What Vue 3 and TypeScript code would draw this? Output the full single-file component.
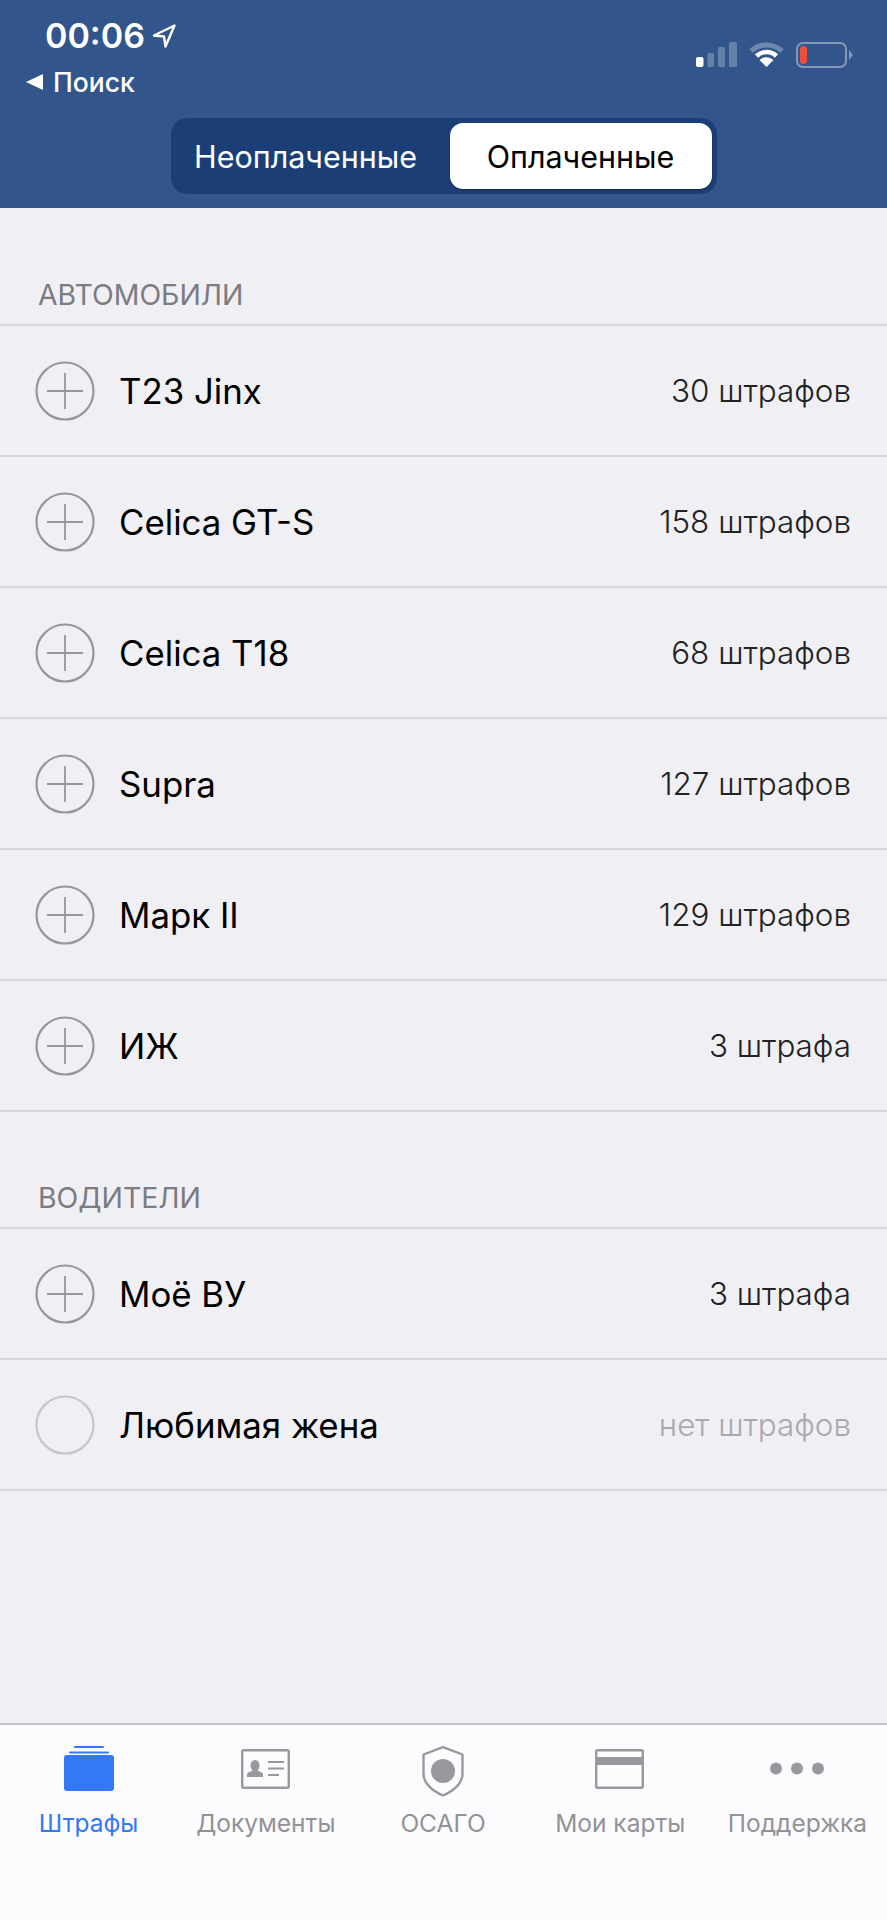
<script setup lang="ts">
interface Row { name: string; count: string; empty?: boolean }
const cars: Row[] = [
  { name: 'T23 Jinx', count: '30 штрафов' },
  { name: 'Celica GT-S', count: '158 штрафов' },
  { name: 'Celica T18', count: '68 штрафов' },
  { name: 'Supra', count: '127 штрафов' },
  { name: 'Марк II', count: '129 штрафов' },
  { name: 'ИЖ', count: '3 штрафа' },
]
const drivers: Row[] = [
  { name: 'Моё ВУ', count: '3 штрафа' },
  { name: 'Любимая жена', count: 'нет штрафов', empty: true },
]
const sections = [
  { title: 'АВТОМОБИЛИ', rows: cars },
  { title: 'ВОДИТЕЛИ', rows: drivers },
]
</script>

<template>
  <div class="screen">
    <header class="head">
      <div class="status">
        <div class="status-left">
          <div class="time-line">
            <span class="time">00:06</span>
            <svg class="loc" width="24" height="24" viewBox="0 0 24 24"><path d="M22.500 1.500 L2 11.500 L12 12.500 L13.500 22.500 Z" fill="none" stroke="#fff" stroke-width="2.400" stroke-linejoin="round"/></svg>
          </div>
          <div class="back-line">
            <svg width="17" height="16" viewBox="0 0 17 16"><path d="M17 0 L0 8 L17 16 Z" fill="#fff"/></svg>
            <span class="back">Поиск</span>
          </div>
        </div>
        <div class="status-right">
          <svg width="41" height="25" viewBox="0 0 41 25">
            <rect x="0" y="15" width="7.500" height="10" rx="2" fill="#fff"/>
            <rect x="11.500" y="11" width="6.500" height="14" rx="1.500" fill="#fff" opacity=".25"/>
            <rect x="22" y="5" width="7" height="20" rx="1.500" fill="#fff" opacity=".25"/>
            <rect x="33" y="0" width="8" height="25" rx="1.500" fill="#fff" opacity=".25"/>
          </svg>
          <svg class="wifi" width="35" height="25" viewBox="0 0 35 25">
            <path d="M2 9 A23 23 0 0 1 33 9" fill="none" stroke="#fff" stroke-opacity=".3" stroke-width="5"/>
            <path d="M7.500 14 A14.500 14.500 0 0 1 27.500 14" fill="none" stroke="#fff" stroke-width="4.500"/>
            <path d="M17.500 25 L10.500 18 A10 10 0 0 1 24.500 18 Z" fill="#fff"/>
          </svg>
          <div class="battery">
            <div class="batt-body"><span class="batt-level"></span></div>
            <span class="batt-tip"></span>
          </div>
        </div>
      </div>
      <div class="segment">
        <div class="seg seg-off">Неоплаченные</div>
        <div class="seg seg-on">Оплаченные</div>
      </div>
    </header>

    <main class="content">
      <section v-for="s in sections" :key="s.title" class="section">
        <h2 class="title">{{ s.title }}</h2>
        <div class="list">
          <div v-for="r in s.rows" :key="r.name" class="row">
            <svg v-if="!r.empty" class="mark" width="60" height="60" viewBox="0 0 60 60">
              <circle cx="30" cy="30" r="28.500" fill="none" stroke="#96969b" stroke-width="2.200"/>
              <path d="M12 30 H48 M30 12 V48" stroke="#96969b" stroke-width="1.800"/>
            </svg>
            <svg v-else class="mark" width="60" height="60" viewBox="0 0 60 60">
              <circle cx="30" cy="30" r="28.500" fill="none" stroke="#c6c6c9" stroke-width="2.200"/>
            </svg>
            <span class="name">{{ r.name }}</span>
            <span class="count" :class="{ muted: r.empty }">{{ r.count }}</span>
          </div>
        </div>
      </section>
    </main>

    <nav class="tabs">
      <div class="tab active">
        <svg width="52" height="56" viewBox="0 0 52 56">
          <rect x="11" y="1" width="30" height="2" rx="1" fill="#3478f6"/>
          <rect x="6" y="6.500" width="40" height="2" rx="1" fill="#3478f6"/>
          <rect x="1" y="10" width="50" height="36" rx="3" fill="#3478f6"/>
        </svg>
        <span>Штрафы</span>
      </div>
      <div class="tab">
        <svg width="52" height="56" viewBox="0 0 52 56">
          <rect x="2.200" y="5.200" width="46.600" height="37.600" rx="1.500" fill="none" stroke="#98989d" stroke-width="2.400"/>
          <ellipse cx="15" cy="20.500" rx="4.500" ry="5.500" fill="#98989d"/>
          <path d="M7 32 V29.500 c0 -3 5 -2.500 6 -5 h4 c1 2.500 6 2 6 5 V32 Z" fill="#98989d"/>
          <path d="M28 17 H44 M28 23.500 H44 M28 30 H39" stroke="#98989d" stroke-width="2"/>
        </svg>
        <span>Документы</span>
      </div>
      <div class="tab">
        <svg width="52" height="56" viewBox="0 -3 52 56">
          <path d="M26 -0.800 L45.500 6.500 V26 C45.500 35 37 43 26 47.500 C15 43 6.500 35 6.500 26 V6.500 Z" fill="none" stroke="#98989d" stroke-width="2.400" stroke-linejoin="round"/>
          <circle cx="26" cy="23" r="12" fill="#98989d"/>
        </svg>
        <span>ОСАГО</span>
      </div>
      <div class="tab">
        <svg width="52" height="56" viewBox="0 0 52 56">
          <rect x="2.200" y="5.200" width="46.600" height="37.600" rx="1.500" fill="none" stroke="#98989d" stroke-width="2.400"/>
          <rect x="2" y="12" width="47" height="8" fill="#98989d"/>
        </svg>
        <span>Мои карты</span>
      </div>
      <div class="tab">
        <svg width="56" height="56" viewBox="0 0 56 56">
          <circle cx="7" cy="23.500" r="6" fill="#98989d"/>
          <circle cx="28" cy="23.500" r="6" fill="#98989d"/>
          <circle cx="49" cy="23.500" r="6" fill="#98989d"/>
        </svg>
        <span>Поддержка</span>
      </div>
    </nav>
  </div>
</template>

<style>
html, body { margin: 0; background: #efeff4; }
</style>

<style scoped>
.screen {
  width: 887px;
  height: 1920px;
  display: flex;
  flex-direction: column;
  overflow: hidden;
  background: #efeff4;
  font-family: Inter, "Liberation Sans", sans-serif;
  color: #000;
}
.head {
  height: 208px;
  flex: none;
  box-sizing: border-box;
  background: #32568c;
  color: #fff;
  display: flex;
  flex-direction: column;
  align-items: center;
}
.status {
  width: 100%;
  height: 118px;
  box-sizing: border-box;
  display: flex;
  justify-content: space-between;
  padding: 16px 34px 0 26px;
}
.status-left { display: flex; flex-direction: column; }
.time-line { display: flex; align-items: center; gap: 7px; padding-left: 19px; height: 40px; }
.time { font-size: 34px; font-weight: 600; line-height: 40px; }
.back-line { display: flex; align-items: center; gap: 10px; height: 30px; margin-top: 11px; }
.back { font-size: 26.500px; font-weight: 500; line-height: 30px; }
.status-right { display: flex; align-items: center; gap: 12px; height: 77px; }
.battery { display: flex; align-items: center; gap: 2px; }
.batt-body {
  width: 51px;
  height: 26px;
  box-sizing: border-box;
  border: 2px solid rgba(255,255,255,.4);
  border-radius: 7px;
  padding: 2px;
  display: flex;
}
.batt-level { width: 7px; background: #ec4f3a; border-radius: 3.500px; }
.batt-tip {
  width: 0; height: 0;
  border-left: 4px solid rgba(255,255,255,.4);
  border-top: 5px solid transparent;
  border-bottom: 5px solid transparent;
}
.segment {
  width: 546px;
  height: 76px;
  box-sizing: border-box;
  padding: 5px;
  border-radius: 16px;
  background: #1c3e77;
  display: flex;
  align-items: stretch;
}
.seg {
  display: flex;
  align-items: center;
  justify-content: center;
  font-size: 30.500px;
  font-weight: 400;
}
.seg-off { flex: 1; padding-right: 14px; }
.seg-on {
  width: 262px;
  background: #fff;
  color: #000;
  border-radius: 13px;
  box-shadow: 0 1px 2px rgba(0,0,0,.4);
}
.content { flex: 1; }
.section { display: flex; flex-direction: column; }
.title {
  margin: 0;
  height: 118px;
  box-sizing: border-box;
  padding: 0 0 13px 38px;
  display: flex;
  align-items: flex-end;
  font-size: 28.400px;
  line-height: 32px;
  font-weight: 400;
  color: #7b7b80;
  border-bottom: 2px solid #d8d8dc;
}
.section + .section .title { height: 117px; }
.list { display: flex; flex-direction: column; }
.row {
  height: 131px;
  box-sizing: border-box;
  border-bottom: 2px solid #d8d8dc;
  display: flex;
  align-items: center;
  padding: 0 36px 0 35px;
}
.mark { flex: none; }
.name { margin-left: 24px; flex: 1; font-size: 34.800px; font-weight: 400; }
.count { font-size: 31.400px; font-weight: 300; color: #222; }
.count.muted { color: #a9a9ad; }
.tabs {
  height: 197px;
  flex: none;
  box-sizing: border-box;
  background: #fcfcfe;
  border-top: 2px solid #c3c3c6;
  display: flex;
  padding: 20px 1px 0 0;
}
.tab {
  flex: 1 1 0;
  min-width: 0;
  display: flex;
  flex-direction: column;
  align-items: center;
  font-size: 24.500px;
  color: #929297;
  white-space: nowrap;
}
.tab svg { display: block; }
.tab span { margin-top: 8px; line-height: 28px; }
.tab.active { color: #3478f6; }
</style>
